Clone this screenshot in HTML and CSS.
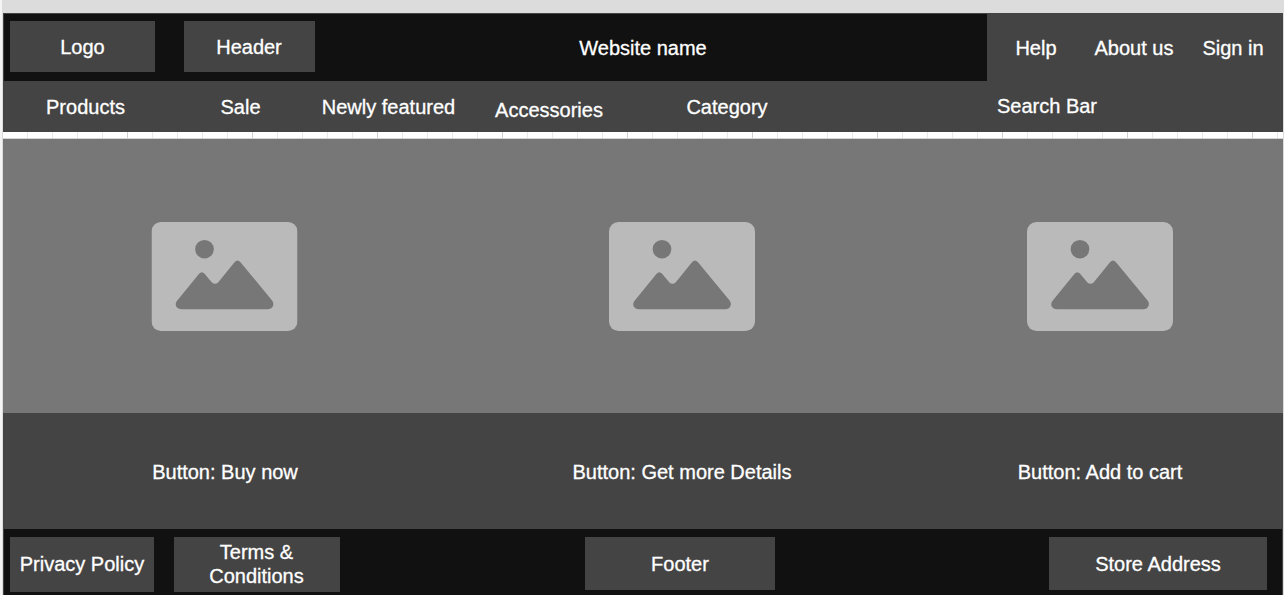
FILE: index.html
```html
<!DOCTYPE html>
<html lang="en">
<head>
<meta charset="utf-8">
<title>Website name</title>
<link rel="stylesheet" href="styles.css">
</head>
<body>
<svg class="defs" aria-hidden="true">
  <symbol id="picture" viewBox="0 0 146 109">
    <rect class="frame" width="146" height="109" rx="9.5"/>
    <circle class="shape" cx="53" cy="27.2" r="9.3"/>
    <path class="shape" d="M25.4 79 L47.6 51.8 Q50.3 48.6 53.1 51.8 L60.2 60.2 Q63.4 63.4 66.8 60.2 L83.2 40 Q86 36.8 88.8 40 L120.6 78.4 C123.6 82.3 121 87.2 116.4 87.2 H30 C25 87.2 22.6 82.6 25.4 79 Z"/>
  </symbol>
</svg>
<div class="page">
  <header class="top">
    <div class="brand">
      <div class="box logo">Logo</div>
      <div class="box heading">Header</div>
      <h1 class="name">Website name</h1>
    </div>
    <nav class="account"><a>Help</a><a>About us</a><a>Sign in</a></nav>
  </header>
  <nav class="menu">
    <a>Products</a><a>Sale</a><a>Newly featured</a><a class="low">Accessories</a><a>Category</a><a class="search">Search Bar</a>
  </nav>
  <div class="ruler"></div>
  <main>
    <section class="gallery">
      <svg class="picture"><use href="#picture" x="-0.5"/></svg>
      <svg class="picture"><use href="#picture"/></svg>
      <svg class="picture"><use href="#picture"/></svg>
    </section>
    <section class="actions"><a>Button: Buy now</a><a>Button: Get more Details</a><a>Button: Add to cart</a></section>
  </main>
  <footer class="footer">
    <div class="box privacy">Privacy Policy</div>
    <div class="box terms">Terms &amp;<br>Conditions</div>
    <div class="box foot">Footer</div>
    <div class="box address">Store Address</div>
  </footer>
</div>
</body>
</html>
```
FILE: styles.css
```css
* { box-sizing: border-box; }

body {
  margin: 0;
  height: 595px;
  overflow: hidden;
  background: linear-gradient(90deg, #f4f4f4 2px, #dcdcdc 2px);
  color: #fff;
  font: 20px/24px "Liberation Sans", Arial, sans-serif;
  -webkit-text-stroke: 0.3px #fff;
}

.defs { display: block; width: 0; height: 0; }

.page {
  width: 1280px;
  height: 582px;
  margin: 13px 0 0 3px;
  background: #444;
}

.top { display: flex; height: 68px; padding: 1px 0 0 1px; }
.brand { display: flex; width: 983px; padding: 7px 0 0 6px; background: #111; }
.box { display: flex; align-items: center; justify-content: center; background: #444; text-align: center; }
.logo { width: 145px; height: 51px; padding-top: 1px; }
.heading { width: 131px; height: 51px; margin-left: 29px; padding: 1px 1px 0 0; }
.name { width: 656px; margin: 15px 0 0; font-size: 20px; font-weight: 400; text-align: center; }

.account { display: grid; grid-template-columns: 98px 98px 100px; padding-top: 22px; text-align: center; }

.menu {
  display: grid;
  grid-template-columns: 165px 145px 151px 170px 186px 454px;
  height: 51px;
  padding-top: 14px;
  text-align: center;
}
.low { padding-top: 3px; }
.search { margin-top: -1px; }

.ruler {
  height: 7px;
  border-bottom: 1px solid #d4d4d4;
  background:
    repeating-linear-gradient(90deg, transparent 0 124px, #d0d0d0 124px 125px),
    repeating-linear-gradient(90deg, transparent 0 24px, #e8e8e8 24px 25px),
    #fff;
}

.gallery, .actions { display: grid; grid-template-columns: 444px 470px 366px; justify-items: center; }
.gallery { height: 274px; padding-top: 83px; background: #777; }
.picture { width: 146px; height: 109px; overflow: visible; }
.picture use { width: 146px; height: 109px; }
.frame { fill: #bababa; }
.shape { fill: #777; }
.actions { height: 116px; padding-top: 47px; }

.footer { display: flex; height: 66px; margin: 0 1px; padding: 8px 0 0 6px; background: #111; }
.privacy { width: 144px; height: 55px; padding-bottom: 1px; }
.terms { width: 166px; height: 55px; margin-left: 20px; padding: 0 1px 1px 0; }
.foot { width: 190px; height: 53px; margin-left: 245px; padding-top: 1px; }
.address { width: 218px; height: 53px; margin-left: 274px; padding-top: 1px; }
```
